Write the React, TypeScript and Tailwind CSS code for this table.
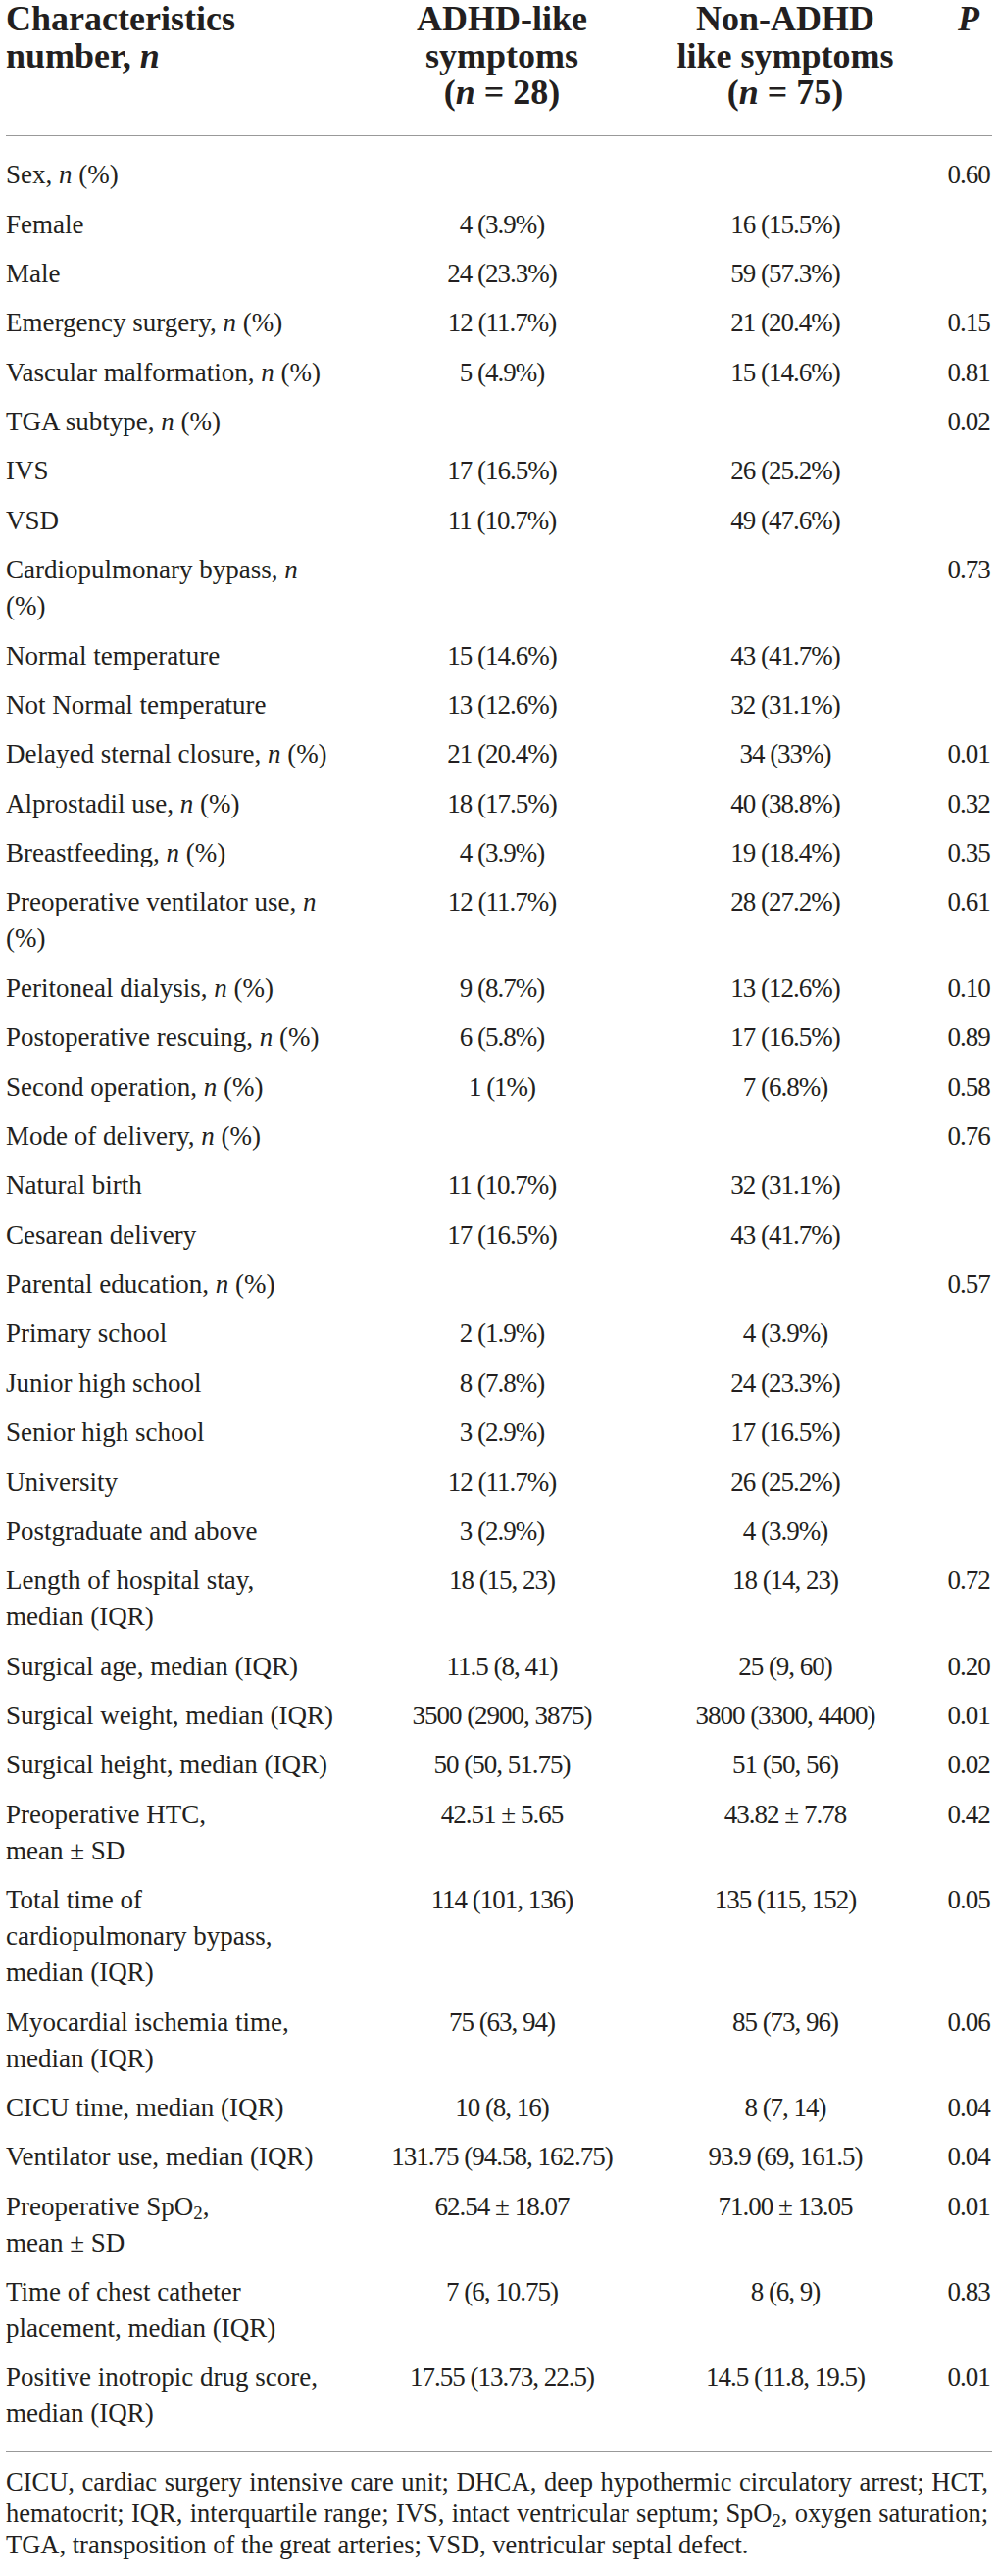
import type { ReactNode } from "react";

const n = <i>n</i>;

type Row = {
  label: ReactNode;
  a?: string;
  b?: string;
  p?: string;
};

const ROWS: Row[] = [
  { label: <>Sex, {n} (%)</>, p: "0.60" },
  { label: "Female", a: "4 (3.9%)", b: "16 (15.5%)" },
  { label: "Male", a: "24 (23.3%)", b: "59 (57.3%)" },
  { label: <>Emergency surgery, {n} (%)</>, a: "12 (11.7%)", b: "21 (20.4%)", p: "0.15" },
  { label: <>Vascular malformation, {n} (%)</>, a: "5 (4.9%)", b: "15 (14.6%)", p: "0.81" },
  { label: <>TGA subtype, {n} (%)</>, p: "0.02" },
  { label: "IVS", a: "17 (16.5%)", b: "26 (25.2%)" },
  { label: "VSD", a: "11 (10.7%)", b: "49 (47.6%)" },
  { label: <>Cardiopulmonary bypass, {n}<br />(%)</>, p: "0.73" },
  { label: "Normal temperature", a: "15 (14.6%)", b: "43 (41.7%)" },
  { label: "Not Normal temperature", a: "13 (12.6%)", b: "32 (31.1%)" },
  { label: <>Delayed sternal closure, {n} (%)</>, a: "21 (20.4%)", b: "34 (33%)", p: "0.01" },
  { label: <>Alprostadil use, {n} (%)</>, a: "18 (17.5%)", b: "40 (38.8%)", p: "0.32" },
  { label: <>Breastfeeding, {n} (%)</>, a: "4 (3.9%)", b: "19 (18.4%)", p: "0.35" },
  { label: <>Preoperative ventilator use, {n}<br />(%)</>, a: "12 (11.7%)", b: "28 (27.2%)", p: "0.61" },
  { label: <>Peritoneal dialysis, {n} (%)</>, a: "9 (8.7%)", b: "13 (12.6%)", p: "0.10" },
  { label: <>Postoperative rescuing, {n} (%)</>, a: "6 (5.8%)", b: "17 (16.5%)", p: "0.89" },
  { label: <>Second operation, {n} (%)</>, a: "1 (1%)", b: "7 (6.8%)", p: "0.58" },
  { label: <>Mode of delivery, {n} (%)</>, p: "0.76" },
  { label: "Natural birth", a: "11 (10.7%)", b: "32 (31.1%)" },
  { label: "Cesarean delivery", a: "17 (16.5%)", b: "43 (41.7%)" },
  { label: <>Parental education, {n} (%)</>, p: "0.57" },
  { label: "Primary school", a: "2 (1.9%)", b: "4 (3.9%)" },
  { label: "Junior high school", a: "8 (7.8%)", b: "24 (23.3%)" },
  { label: "Senior high school", a: "3 (2.9%)", b: "17 (16.5%)" },
  { label: "University", a: "12 (11.7%)", b: "26 (25.2%)" },
  { label: "Postgraduate and above", a: "3 (2.9%)", b: "4 (3.9%)" },
  { label: <>Length of hospital stay,<br />median (IQR)</>, a: "18 (15, 23)", b: "18 (14, 23)", p: "0.72" },
  { label: "Surgical age, median (IQR)", a: "11.5 (8, 41)", b: "25 (9, 60)", p: "0.20" },
  { label: "Surgical weight, median (IQR)", a: "3500 (2900, 3875)", b: "3800 (3300, 4400)", p: "0.01" },
  { label: "Surgical height, median (IQR)", a: "50 (50, 51.75)", b: "51 (50, 56)", p: "0.02" },
  { label: <>Preoperative HTC,<br />mean ± SD</>, a: "42.51 ± 5.65", b: "43.82 ± 7.78", p: "0.42" },
  { label: <>Total time of<br />cardiopulmonary bypass,<br />median (IQR)</>, a: "114 (101, 136)", b: "135 (115, 152)", p: "0.05" },
  { label: <>Myocardial ischemia time,<br />median (IQR)</>, a: "75 (63, 94)", b: "85 (73, 96)", p: "0.06" },
  { label: "CICU time, median (IQR)", a: "10 (8, 16)", b: "8 (7, 14)", p: "0.04" },
  { label: "Ventilator use, median (IQR)", a: "131.75 (94.58, 162.75)", b: "93.9 (69, 161.5)", p: "0.04" },
  { label: <>Preoperative SpO<sub className="text-[0.7em]">2</sub>,<br />mean ± SD</>, a: "62.54 ± 18.07", b: "71.00 ± 13.05", p: "0.01" },
  { label: <>Time of chest catheter<br />placement, median (IQR)</>, a: "7 (6, 10.75)", b: "8 (6, 9)", p: "0.83" },
  { label: <>Positive inotropic drug score,<br />median (IQR)</>, a: "17.55 (13.73, 22.5)", b: "14.5 (11.8, 19.5)", p: "0.01" },
];

const GRID = "grid grid-cols-[375px_262px_316px_58px]";

export default function App() {
  return (
    <div className="w-[1017px] bg-white pl-[6px] font-['Liberation_Serif',serif] text-[#231f20]">
      {/* header */}
      <div className={`${GRID} pt-[1px] pb-[24px] text-[36px] font-bold leading-[37.5px]`}>
        <div>
          Characteristics
          <br />
          number, <i>n</i>
        </div>
        <div className="text-center">
          ADHD-like
          <br />
          symptoms
          <br />
          (<i>n</i> = 28)
        </div>
        <div className="text-center">
          Non-ADHD
          <br />
          like symptoms
          <br />
          (<i>n</i> = 75)
        </div>
        <div className="text-center italic">P</div>
      </div>
      <div className="mr-[5px] h-px bg-[#999]" />

      {/* body */}
      <div className="pt-[15px] pb-[12px] text-[27px] leading-[37px]">
        {ROWS.map((row, i) => (
          <div key={i} className={`${GRID} py-[6.7px]`}>
            <div className="whitespace-nowrap">{row.label}</div>
            <div className="whitespace-nowrap text-center tracking-[-1px]">{row.a}</div>
            <div className="whitespace-nowrap text-center tracking-[-1px]">{row.b}</div>
            <div className="whitespace-nowrap text-center tracking-[-1px]">{row.p}</div>
          </div>
        ))}
      </div>
      <div className="mr-[5px] h-px bg-[#999]" />

      {/* footnote */}
      <div className="mr-[9px] pt-[15px] pb-[10px] text-[26.5px] leading-[32px] whitespace-nowrap">
        <p className="[text-align-last:justify]">
          CICU, cardiac surgery intensive care unit; DHCA, deep hypothermic circulatory arrest; HCT,
        </p>
        <p className="[text-align-last:justify]">
          hematocrit; IQR, interquartile range; IVS, intact ventricular septum; SpO
          <sub className="text-[0.7em]">2</sub>, oxygen saturation;
        </p>
        <p>TGA, transposition of the great arteries; VSD, ventricular septal defect.</p>
      </div>
    </div>
  );
}
